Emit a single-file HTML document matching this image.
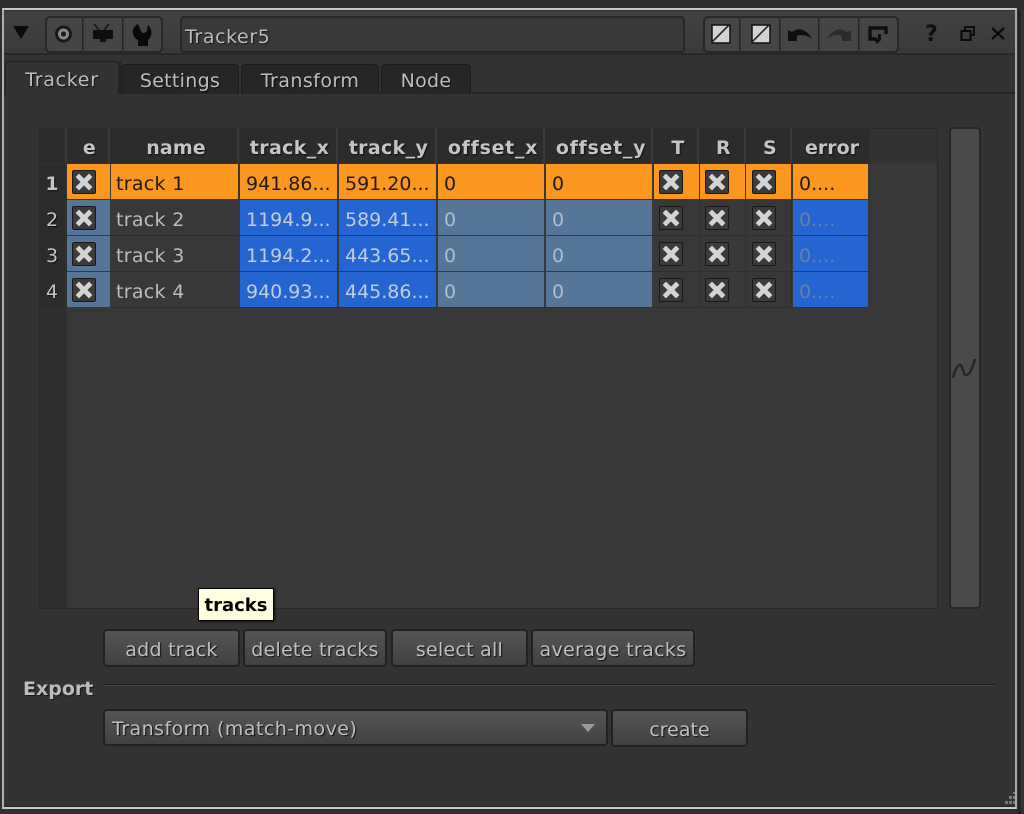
<!DOCTYPE html>
<html><head><meta charset="utf-8">
<style>
html,body{margin:0;padding:0;width:1024px;height:814px;overflow:hidden;background:#2f2f2f}
*{box-sizing:border-box}
body{font-family:"DejaVu Sans","Liberation Sans",sans-serif;font-size:19px;color:#c8c8c8;position:relative}
.a{position:absolute}
.t{position:absolute;white-space:nowrap;line-height:24px;text-shadow:1px 1px 1px #151515}
.h{position:absolute;top:128px;height:35px;background:#2c2c2c;border-right:2px solid #3a3a3a;font-weight:bold;text-align:center;line-height:40px;padding-left:4px;letter-spacing:.35px;color:#c4c4c4;text-shadow:1px 1px 1px #111;white-space:nowrap;overflow:hidden}
.c{position:absolute;height:35px;line-height:40px;padding-left:6px;white-space:nowrap;overflow:hidden;color:#bdbdbd}
.n{padding-left:5px;letter-spacing:.3px}
.o{background:#fb961f;color:#1c1c1c}
.b{background:#2565d2;color:#c4ccd8}
.g{background:#557699;color:#b4bcc6}
.d{background:#383838}
.e{background:#2565d2;color:#6d7f9c}
.r{position:absolute;left:39px;width:26px;height:35px;background:#2c2c2c;text-align:center;line-height:40px;color:#c4c4c4;text-shadow:1px 1px 1px #111}
.x{position:absolute;width:24px;height:24px;background:#3b3b3b;border:1px solid #191919;border-radius:2px}
.x svg{position:absolute;left:2px;top:2px}
.btn{position:absolute;top:629px;height:38px;border:2px solid #222;border-radius:4px;background:linear-gradient(#555,#414141);text-align:center;line-height:38px;letter-spacing:.25px;color:#c0c0c0;text-shadow:1px 1px 1px #111;white-space:nowrap}
.tab{position:absolute;top:64px;height:29px;background:#262626;border:1px solid #1d1d1d;border-bottom:none;border-radius:4px 4px 0 0;text-align:center;line-height:33px;letter-spacing:.3px;color:#bdbdbd;text-shadow:1px 1px 1px #111}
.seg{position:absolute;top:16px;height:37px;background:#454545;border:2px solid #272727;border-radius:5px}
.sep{position:absolute;top:16px;width:1px;height:37px;background:#272727;box-shadow:1px 0 0 #333}
</style></head><body>

<!-- window frame -->
<div class="a" style="left:2px;top:8px;width:1015px;height:801px;background:#333;border:2px solid #c8c8c8;border-left-color:#b0b0b0;border-right-color:#a8a8a8;border-bottom-color:#c8c8c8"></div>
<div class="a" style="left:1018px;top:10px;width:6px;height:804px;background:#333;border-left:3px solid #252525"></div>
<div class="a" style="left:4px;top:806px;width:1011px;height:1px;background:#252525"></div>

<!-- title bar -->
<div class="a" style="left:4px;top:11px;width:1011px;height:44px;background:linear-gradient(#414141,#3a3a3a);border-bottom:2px solid #292929"></div>
<svg class="a" style="left:13px;top:25px" width="17" height="15"><path d="M0 1H16L8 14Z" fill="#0c0c0c"/></svg>

<div class="seg" style="left:45px;width:118px"></div>
<div class="sep" style="left:82px"></div><div class="sep" style="left:122px"></div>
<svg class="a" style="left:52px;top:23px" width="24" height="24"><circle cx="11.5" cy="11" r="8.5" fill="#181818"/><circle cx="11.5" cy="11" r="5.5" fill="#8a8a8a"/><circle cx="11.5" cy="11" r="2.6" fill="#1c1c1c"/></svg>
<svg class="a" style="left:90px;top:22px" width="26" height="24"><path d="M4 2L9 8M19 2L14 8" stroke="#151515" stroke-width="1.6" fill="none"/><rect x="3" y="8" width="20" height="9" rx="1" fill="#0e0e0e"/><rect x="10" y="17" width="6" height="3" fill="#111"/></svg>
<svg class="a" style="left:130px;top:22px" width="24" height="28"><path d="M8 2C2 5 1 12 6 17L8 18V24H18V18C22 15 23 8 18 3L17 9Q13 13 11 9Z" fill="#0a0a0a"/></svg>

<div class="a" style="left:180px;top:16px;width:505px;height:37px;background:#393939;border:2px solid #272727;border-radius:4px"></div>
<div class="t" style="left:185px;top:25px;color:#bcbcbc;letter-spacing:.6px">Tracker5</div>

<div class="seg" style="left:703px;width:196px"></div>
<div class="sep" style="left:739px"></div><div class="sep" style="left:779px"></div><div class="sep" style="left:818px"></div><div class="sep" style="left:858px"></div>
<svg class="a" style="left:711px;top:24px" width="20" height="20"><rect x="1" y="1" width="18" height="18" fill="#d2d2d2" stroke="#111" stroke-width="1.5"/><path d="M0 19L19 0" stroke="#222" stroke-width="1.6"/></svg>
<svg class="a" style="left:751px;top:24px" width="20" height="20"><rect x="1" y="1" width="18" height="18" fill="#d2d2d2" stroke="#111" stroke-width="1.5"/><path d="M0 19L19 0" stroke="#222" stroke-width="1.6"/></svg>
<svg class="a" style="left:787px;top:26px" width="26" height="18"><path d="M1 4L5 6C11 1 20 3 25 13C20 9 15 8 10 10V15H1Z" fill="#0e0e0e"/></svg>
<svg class="a" style="left:826px;top:26px" width="26" height="18"><path d="M25 4L21 6C15 1 6 3 1 13C6 9 11 8 16 10V15H25Z" fill="#2b2b2b"/></svg>
<svg class="a" style="left:865px;top:22px" width="24" height="24"><path d="M21 12V6H5V17H12" fill="none" stroke="#0e0e0e" stroke-width="3.4"/><path d="M16 12V18L12 22L9 17H13V12Z" fill="#0e0e0e"/></svg>

<div class="t" style="left:925px;top:23px;font-weight:bold;font-size:22px;color:#0f0f0f;text-shadow:none">?</div>
<svg class="a" style="left:960px;top:25px" width="16" height="16"><rect x="1.5" y="6" width="9" height="9" fill="none" stroke="#080808" stroke-width="2"/><path d="M5 5V2H14V10H11" fill="none" stroke="#080808" stroke-width="1.8"/></svg>
<svg class="a" style="left:990px;top:25px" width="16" height="16"><path d="M2 3L14 14M14 3L2 14" stroke="#080808" stroke-width="2.2"/></svg>

<!-- tabs -->
<div class="a" style="left:4px;top:92px;width:1011px;height:2px;background:#262626"></div>
<div class="tab" style="left:121px;width:118px">Settings</div>
<div class="tab" style="left:241px;width:138px;letter-spacing:.45px">Transform</div>
<div class="tab" style="left:381px;width:90px">Node</div>
<div class="tab" style="left:5px;top:61px;height:34px;width:114px;background:#333;line-height:37px;border-color:#232323;letter-spacing:.7px">Tracker</div>
<div class="a" style="left:119px;top:61px;width:2px;height:32px;background:#262626"></div>

<!-- table -->
<div class="a" style="left:39px;top:128px;width:899px;height:481px;background:#383838;border:1px solid #292929"></div>
<div class="a" style="left:40px;top:129px;width:27px;height:479px;background:#2f2f2f"></div>
<div class="a" style="left:40px;top:129px;width:897px;height:35px;background:#333"></div>

<div class="h" style="left:40px;width:27px"></div>
<div class="h" style="left:67px;width:43px">e</div>
<div class="h" style="left:110px;width:129px;padding-left:5px;letter-spacing:.1px">name</div>
<div class="h" style="left:239px;width:99px">track_x</div>
<div class="h" style="left:338px;width:99px">track_y</div>
<div class="h" style="left:437px;width:108px;letter-spacing:.7px;padding-left:6px">offset_x</div>
<div class="h" style="left:545px;width:108px;letter-spacing:.7px;padding-left:6px">offset_y</div>
<div class="h" style="left:653px;width:46px;padding-left:6px">T</div>
<div class="h" style="left:699px;width:47px">R</div>
<div class="h" style="left:746px;width:46px">S</div>
<div class="h" style="left:792px;width:78px;border-right:none;padding-left:2px;letter-spacing:0">error</div>

<!-- row 1 -->
<div class="r" style="top:164px;font-weight:bold">1</div>
<div class="c o" style="left:67px;top:164px;width:43px"></div>
<div class="c o n" style="left:111px;top:164px;width:127px">track 1</div>
<div class="c o" style="left:240px;top:164px;width:97px">941.86...</div>
<div class="c o" style="left:339px;top:164px;width:97px">591.20...</div>
<div class="c o" style="left:438px;top:164px;width:106px">0</div>
<div class="c o" style="left:546px;top:164px;width:106px">0</div>
<div class="c o" style="left:654px;top:164px;width:45px"></div>
<div class="c o" style="left:700px;top:164px;width:45px"></div>
<div class="c o" style="left:746px;top:164px;width:45px"></div>
<div class="c o" style="left:793px;top:164px;width:75px">0....</div>

<!-- row 2 -->
<div class="r" style="top:200px">2</div>
<div class="c g" style="left:67px;top:200px;width:43px"></div>
<div class="c d n" style="left:111px;top:200px;width:127px">track 2</div>
<div class="c b" style="left:240px;top:200px;width:97px">1194.9...</div>
<div class="c b" style="left:339px;top:200px;width:97px">589.41...</div>
<div class="c g" style="left:438px;top:200px;width:106px">0</div>
<div class="c g" style="left:546px;top:200px;width:106px">0</div>
<div class="c e" style="left:793px;top:200px;width:75px">0....</div>

<!-- row 3 -->
<div class="r" style="top:236px">3</div>
<div class="c g" style="left:67px;top:236px;width:43px"></div>
<div class="c d n" style="left:111px;top:236px;width:127px">track 3</div>
<div class="c b" style="left:240px;top:236px;width:97px">1194.2...</div>
<div class="c b" style="left:339px;top:236px;width:97px">443.65...</div>
<div class="c g" style="left:438px;top:236px;width:106px">0</div>
<div class="c g" style="left:546px;top:236px;width:106px">0</div>
<div class="c e" style="left:793px;top:236px;width:75px">0....</div>

<!-- row 4 -->
<div class="r" style="top:272px">4</div>
<div class="c g" style="left:67px;top:272px;width:43px"></div>
<div class="c d n" style="left:111px;top:272px;width:127px">track 4</div>
<div class="c b" style="left:240px;top:272px;width:97px">940.93...</div>
<div class="c b" style="left:339px;top:272px;width:97px">445.86...</div>
<div class="c g" style="left:438px;top:272px;width:106px">0</div>
<div class="c g" style="left:546px;top:272px;width:106px">0</div>
<div class="c e" style="left:793px;top:272px;width:75px">0....</div>

<!-- cell separators for checkbox columns -->
<div class="a" style="left:699px;top:200px;width:1px;height:107px;background:#2f2f2f"></div>
<div class="a" style="left:745px;top:200px;width:1px;height:107px;background:#2f2f2f"></div>
<div class="a" style="left:791px;top:200px;width:1px;height:107px;background:#2f2f2f"></div>
<div class="a" style="left:653px;top:235px;width:139px;height:1px;background:#2f2f2f"></div>
<div class="a" style="left:653px;top:271px;width:139px;height:1px;background:#2f2f2f"></div>
<div class="a" style="left:110px;top:235px;width:128px;height:1px;background:#2c2c2c"></div>
<div class="a" style="left:110px;top:271px;width:128px;height:1px;background:#2c2c2c"></div>
<div class="a" style="left:110px;top:307px;width:758px;height:1px;background:#2f2f2f"></div>

<!-- checkboxes -->
<div class="x" style="left:72px;top:170px"><svg width="18" height="18"><path d="M4 4L14 14M14 4L4 14" stroke="#d4d4d4" stroke-width="4.8" stroke-linecap="square"/></svg></div>
<div class="x" style="left:72px;top:206px"><svg width="18" height="18"><path d="M4 4L14 14M14 4L4 14" stroke="#d4d4d4" stroke-width="4.8" stroke-linecap="square"/></svg></div>
<div class="x" style="left:72px;top:242px"><svg width="18" height="18"><path d="M4 4L14 14M14 4L4 14" stroke="#d4d4d4" stroke-width="4.8" stroke-linecap="square"/></svg></div>
<div class="x" style="left:72px;top:278px"><svg width="18" height="18"><path d="M4 4L14 14M14 4L4 14" stroke="#d4d4d4" stroke-width="4.8" stroke-linecap="square"/></svg></div>

<div class="x" style="left:659px;top:170px"><svg width="18" height="18"><path d="M4 4L14 14M14 4L4 14" stroke="#d4d4d4" stroke-width="4.8" stroke-linecap="square"/></svg></div>
<div class="x" style="left:705px;top:170px"><svg width="18" height="18"><path d="M4 4L14 14M14 4L4 14" stroke="#d4d4d4" stroke-width="4.8" stroke-linecap="square"/></svg></div>
<div class="x" style="left:752px;top:170px"><svg width="18" height="18"><path d="M4 4L14 14M14 4L4 14" stroke="#d4d4d4" stroke-width="4.8" stroke-linecap="square"/></svg></div>

<div class="x" style="left:659px;top:206px"><svg width="18" height="18"><path d="M4 4L14 14M14 4L4 14" stroke="#d4d4d4" stroke-width="4.8" stroke-linecap="square"/></svg></div>
<div class="x" style="left:705px;top:206px"><svg width="18" height="18"><path d="M4 4L14 14M14 4L4 14" stroke="#d4d4d4" stroke-width="4.8" stroke-linecap="square"/></svg></div>
<div class="x" style="left:752px;top:206px"><svg width="18" height="18"><path d="M4 4L14 14M14 4L4 14" stroke="#d4d4d4" stroke-width="4.8" stroke-linecap="square"/></svg></div>

<div class="x" style="left:659px;top:242px"><svg width="18" height="18"><path d="M4 4L14 14M14 4L4 14" stroke="#d4d4d4" stroke-width="4.8" stroke-linecap="square"/></svg></div>
<div class="x" style="left:705px;top:242px"><svg width="18" height="18"><path d="M4 4L14 14M14 4L4 14" stroke="#d4d4d4" stroke-width="4.8" stroke-linecap="square"/></svg></div>
<div class="x" style="left:752px;top:242px"><svg width="18" height="18"><path d="M4 4L14 14M14 4L4 14" stroke="#d4d4d4" stroke-width="4.8" stroke-linecap="square"/></svg></div>

<div class="x" style="left:659px;top:278px"><svg width="18" height="18"><path d="M4 4L14 14M14 4L4 14" stroke="#d4d4d4" stroke-width="4.8" stroke-linecap="square"/></svg></div>
<div class="x" style="left:705px;top:278px"><svg width="18" height="18"><path d="M4 4L14 14M14 4L4 14" stroke="#d4d4d4" stroke-width="4.8" stroke-linecap="square"/></svg></div>
<div class="x" style="left:752px;top:278px"><svg width="18" height="18"><path d="M4 4L14 14M14 4L4 14" stroke="#d4d4d4" stroke-width="4.8" stroke-linecap="square"/></svg></div>

<!-- curve button -->
<div class="a" style="left:949px;top:127px;width:32px;height:482px;background:#4a4a4a;border:2px solid #272727;border-radius:4px"></div>
<svg class="a" style="left:951px;top:357px" width="28" height="26"><path d="M2 21C4 12 7 8 9 8C12 8 12 18 15 18C19 18 21 12 24 2" fill="none" stroke="#262626" stroke-width="2.5"/></svg>

<!-- tooltip -->
<div class="a" style="left:198px;top:588px;width:76px;height:33px;background:#ffffe0;border:1px solid #000;box-shadow:1px 1px 2px #111;text-align:center;line-height:33px;font-weight:bold;color:#000;font-size:18px;z-index:5">tracks</div>

<!-- buttons -->
<div class="btn" style="left:103px;width:137px">add track</div>
<div class="btn" style="left:243px;width:144px">delete tracks</div>
<div class="btn" style="left:391px;width:137px">select all</div>
<div class="btn" style="left:531px;width:164px;letter-spacing:.35px">average tracks</div>

<!-- export -->
<div class="t" style="left:23px;top:677px;font-weight:bold;color:#bcbcbc">Export</div>
<div class="a" style="left:103px;top:684px;width:893px;height:2px;background:#1f1f1f;border-bottom:1px solid #444"></div>

<div class="btn" style="left:103px;top:709px;width:505px;height:37px;text-align:left;padding-left:7px;line-height:37px;letter-spacing:.45px">Transform (match-move)</div>
<svg class="a" style="left:581px;top:724px" width="15" height="9"><path d="M0 0H14L7 8Z" fill="#999"/></svg>
<div class="btn" style="left:611px;top:709px;width:137px;line-height:39px;letter-spacing:0">create</div>

<!-- resize grip -->
<svg class="a" style="left:1000px;top:790px" width="16" height="18"><g fill="#777"><rect x="13" y="2" width="2" height="2"/><rect x="9" y="6" width="3" height="3"/><rect x="13" y="6" width="2" height="3"/><rect x="5" y="11" width="3" height="3"/><rect x="9" y="11" width="3" height="3"/><rect x="13" y="11" width="2" height="3"/></g></svg>

</body></html>
